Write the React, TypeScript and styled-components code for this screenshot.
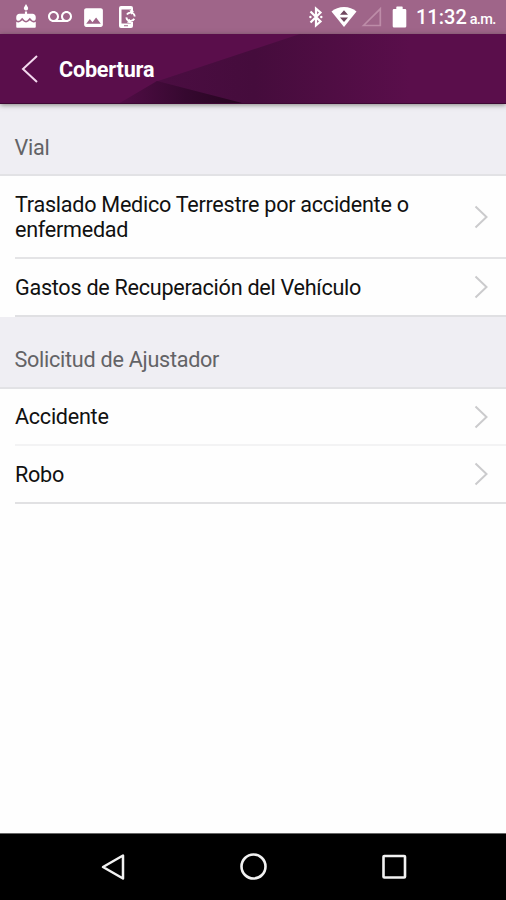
import React from "react";
import styled, { createGlobalStyle } from "styled-components";
import { MdCake, MdVoicemail, MdImage } from "react-icons/md";

const GlobalStyle = createGlobalStyle`
  * { box-sizing: border-box; }
  body { margin: 0; background: #fff; font-family: Roboto, "Liberation Sans", sans-serif; }
`;

const Screen = styled.div`
  width: 506px;
  height: 900px;
  display: flex;
  flex-direction: column;
  background: #fefefe;
  overflow: hidden;
`;

const StatusBar = styled.div`
  height: 34px;
  flex: none;
  display: flex;
  align-items: center;
  justify-content: space-between;
  padding: 0 10px 0 13px;
  background: #9f6589;
  color: #fff;
`;

const StatusGroup = styled.div<{ $gap: number }>`
  display: flex;
  align-items: center;
  gap: ${(p) => p.$gap}px;
  svg { display: block; flex: none; }
`;

const Clock = styled.div`
  width: 80px;
  font-size: 20px;
  font-weight: 500;
  line-height: 24px;
  white-space: nowrap;
  padding-top: 3px;
`;

const Meridiem = styled.span`
  font-size: 14.5px;
  margin-left: 3px;
  letter-spacing: -0.7px;
`;

const Header = styled.header`
  height: 70px;
  flex: none;
  display: grid;
  background: #5a0e4b;
  z-index: 1;
  box-shadow: 0 1px 5px rgba(60, 60, 50, 0.6);
  > * { grid-area: 1 / 1; }
`;

const HeaderBar = styled.div`
  display: flex;
  align-items: center;
  padding-left: 21px;
  gap: 20px;
`;

const Title = styled.h1`
  margin: 0;
  padding-top: 2px;
  color: #fff;
  font-size: 21.6px;
  letter-spacing: -0.2px;
  font-weight: 700;
  line-height: 28px;
`;

const SectionTitle = styled.h2<{ $bottom: number }>`
  height: 72px;
  margin: 0;
  padding: 0 15px ${(p) => p.$bottom}px 14.5px;
  display: flex;
  align-items: flex-end;
  background: #efeef3;
  border-bottom: 2px solid #e2e2e5;
  color: #636366;
  font-size: 21.6px;
  letter-spacing: -0.27px;
  font-weight: 400;
  line-height: 26px;
`;

const List = styled.ul`
  margin: 0;
  padding: 0 0 0 15px;
  list-style: none;
`;

const Row = styled.li<{ $height: number; $line: string }>`
  height: ${(p) => p.$height}px;
  padding-right: 17px;
  display: flex;
  align-items: center;
  justify-content: space-between;
  border-bottom: 2px solid ${(p) => p.$line};
`;

const Label = styled.span`
  width: 410px;
  padding-top: 2px;
  color: #111;
  font-size: 21.6px;
  letter-spacing: -0.27px;
  line-height: 24.5px;
`;

const Content = styled.main`
  flex: 1;
`;

const NavBar = styled.nav`
  height: 67px;
  flex: none;
  display: flex;
  align-items: center;
  justify-content: space-between;
  padding: 0 98px 0 99px;
  background: #000;
  border-top: 1px solid #666;
`;

const PhoneSync = () => (
  <svg width="20" height="24" viewBox="0 0 20 24">
    <path fill="#fff" fillRule="evenodd" d="M4 1h10a2 2 0 0 1 2 2v3.500h-2V4.500H4.500v14H14V17h2v4a2 2 0 0 1-2 2H4a2 2 0 0 1-2-2V3a2 2 0 0 1 2-2zM7 20.200v1h4v-1z" />
    <circle cx="13.500" cy="11.800" r="4.200" fill="none" stroke="#fff" strokeWidth="1.900" strokeDasharray="10.200 3" strokeDashoffset="-2" />
    <path fill="#fff" d="M12.500 5l4.500 1-2.500 3.800zM14.500 18.600l-4.500-1 2.500-3.800z" />
  </svg>
);

const Bluetooth = () => (
  <svg width="16" height="22" viewBox="0 0 16 22" fill="none" stroke="#fff" strokeWidth="2.200">
    <path d="M2.500 5.500L12.500 15.500 8 19.300V2.700L12.500 6.500 2.500 16.500" />
    <circle cx="2.400" cy="11" r="1.200" fill="#fff" stroke="none" />
    <circle cx="13.300" cy="11" r="1.200" fill="#fff" stroke="none" />
  </svg>
);

const Wifi = () => (
  <svg width="26" height="22" viewBox="0 0 26 22">
    <path fill="#fff" d="M13 21L.5 5.500C4 2.500 8 1 13 1s9 1.500 12.500 4.500z" />
    <path fill="#70475f" d="M13 4.200l4 4.500H9zM13 16l-4-4.500h8z" />
  </svg>
);

const Signal = () => (
  <svg width="21" height="22" viewBox="0 0 21 22">
    <path fill="none" stroke="#bd8ca8" strokeWidth="1.700" d="M2.500 19.500L19.300 2.800v16.700z" />
  </svg>
);

const Battery = () => (
  <svg width="15" height="22" viewBox="0 0 15 22">
    <path fill="#fff" d="M5 .5h5a.7.7 0 0 1 .7.700V3H13a1.300 1.300 0 0 1 1.300 1.300v16A1.300 1.300 0 0 1 13 21.500H2A1.300 1.300 0 0 1 .7 20.300v-16A1.300 1.300 0 0 1 2 3h2.300V1.200A.7.700 0 0 1 5 .5z" />
  </svg>
);

const HeaderFacets = () => (
  <svg width="506" height="70" viewBox="0 0 506 70">
    <defs>
      <linearGradient id="wide" x1="150" x2="410" y1="0" y2="0" gradientUnits="userSpaceOnUse">
        <stop offset="0" stopColor="#4b0d42" />
        <stop offset="0.400" stopColor="#450c3c" />
        <stop offset="1" stopColor="#5a0e4b" />
      </linearGradient>
      <linearGradient id="low" x1="115" x2="245" y1="0" y2="0" gradientUnits="userSpaceOnUse">
        <stop offset="0" stopColor="#530d47" />
        <stop offset="0.550" stopColor="#35082f" />
        <stop offset="1" stopColor="#26051f" />
      </linearGradient>
    </defs>
    <path fill="url(#wide)" d="M155 48L300 0H506V70H240z" />
    <path fill="url(#low)" d="M118 70L157 47 246 70z" />
    <path fill="#3d0733" d="M0 69h506v1H0z" />
  </svg>
);

const Chevron = () => (
  <svg width="15" height="24" viewBox="0 0 15 24">
    <path fill="none" stroke="#cbcbcd" strokeWidth="2" d="M1.500 1.500L12.500 12 1.500 22.500" />
  </svg>
);

const sections = [
  {
    title: "Vial",
    bottom: 13,
    rows: [
      { label: "Traslado Medico Terrestre por accidente o enfermedad", height: 83, line: "#e4e4e6" },
      { label: "Gastos de Recuperación del Vehículo", height: 58, line: "#e0e0e3" },
    ],
  },
  {
    title: "Solicitud de Ajustador",
    bottom: 14,
    rows: [
      { label: "Accidente", height: 57, line: "#f3f3f4" },
      { label: "Robo", height: 58, line: "#e1e1e3" },
    ],
  },
];

export default function App() {
  return (
    <Screen>
      <GlobalStyle />
      <StatusBar>
        <StatusGroup $gap={9}>
          <MdCake size={26} />
          <MdVoicemail size={24} />
          <StatusGroup $gap={11}>
            <MdImage size={25} />
            <PhoneSync />
          </StatusGroup>
        </StatusGroup>
        <StatusGroup $gap={4}>
          <StatusGroup $gap={7}>
            <Bluetooth />
            <Wifi />
          </StatusGroup>
          <StatusGroup $gap={9}>
            <StatusGroup $gap={10}>
              <Signal />
              <Battery />
            </StatusGroup>
            <Clock>
              11:32<Meridiem>a.m.</Meridiem>
            </Clock>
          </StatusGroup>
        </StatusGroup>
      </StatusBar>
      <Header>
        <HeaderFacets />
        <HeaderBar>
          <svg width="18" height="30" viewBox="0 0 18 30">
            <path fill="none" stroke="#f3d9ee" strokeWidth="2" d="M16 2L2 15l14 13" />
          </svg>
          <Title>Cobertura</Title>
        </HeaderBar>
      </Header>
      <Content>
        {sections.map((s) => (
          <section key={s.title}>
            <SectionTitle $bottom={s.bottom}>{s.title}</SectionTitle>
            <List>
              {s.rows.map((r) => (
                <Row key={r.label} $height={r.height} $line={r.line}>
                  <Label>{r.label}</Label>
                  <Chevron />
                </Row>
              ))}
            </List>
          </section>
        ))}
      </Content>
      <NavBar>
        <svg width="28" height="30" viewBox="0 0 28 30">
          <path fill="none" stroke="#f2f2f2" strokeWidth="2.500" strokeLinejoin="round" d="M24 3.500v23L4 15z" />
        </svg>
        <svg width="30" height="30" viewBox="0 0 30 30">
          <circle cx="14.500" cy="14.500" r="12" fill="none" stroke="#f2f2f2" strokeWidth="2.600" />
        </svg>
        <svg width="28" height="30" viewBox="0 0 28 30">
          <rect x="3.500" y="4" width="21.500" height="21.500" rx="0.800" fill="none" stroke="#f2f2f2" strokeWidth="2.600" />
        </svg>
      </NavBar>
    </Screen>
  );
}
